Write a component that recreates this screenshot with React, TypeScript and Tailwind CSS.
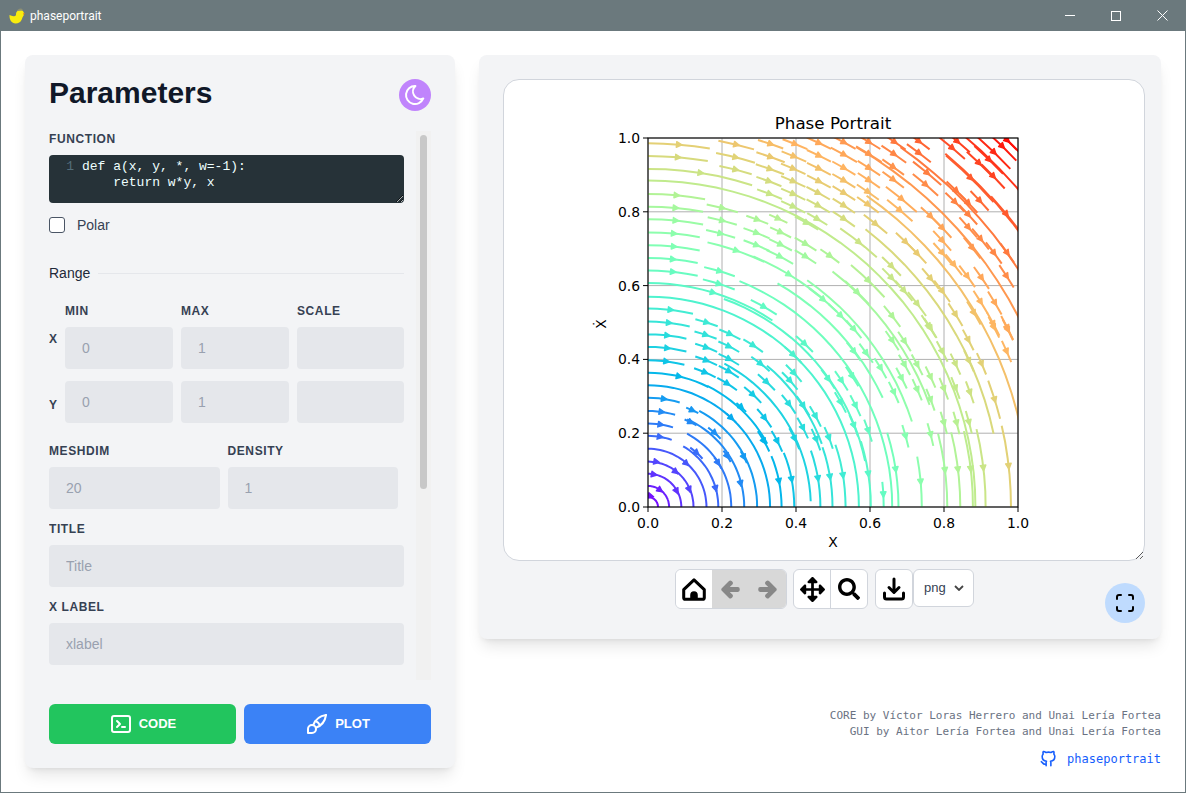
import { TbBrandGithub, TbBrush, TbMaximize, TbMoon, TbTerminal2 } from "react-icons/tb";
import { FaArrowLeft, FaArrowRight, FaArrowsAlt, FaSearch } from "react-icons/fa";

const rainbow = (t: number) => {
  const r = Math.min(1, Math.abs(2 * t - 0.5));
  const g = Math.sin(Math.PI * t);
  const b = Math.cos((Math.PI * t) / 2);
  return `rgb(${Math.round(r * 255)},${Math.round(g * 255)},${Math.round(b * 255)})`;
};

// plot frame inside the 640x480 figure
const PX = 144;
const PY = 58;
const PW = 370;
const PH = 369;
const sx = (v: number) => PX + v * PW;
const sy = (v: number) => PY + PH - v * PH;
const TICKS = [0, 0.2, 0.4, 0.6, 0.8, 1];
const colorOf = (r: number) => rainbow(Math.min(1, r / Math.SQRT2));
const DEG = Math.PI / 180;

// streamlines read off the figure: [radius, from, to], degrees clockwise from the y axis
const LONG_ARCS: number[][] = [
  [0.027, 0, 90], [0.057, 0, 90], [0.09, 0, 90], [0.123, 0, 90], [0.158, 0, 90],
  [0.19, 30, 90], [0.225, 28, 90], [0.26, 24, 90], [0.295, 28, 90], [0.33, 0, 90], [0.365, 26, 62],
  [0.44, 28, 88], [0.5, 40, 70], [0.57, 0, 90], [0.6, 20, 78], [0.66, 22, 90], [0.7, 30, 65],
  [0.75, 35, 72], [0.81, 38, 70], [0.885, 0, 90], [0.955, 38, 78], [1.03, 35, 90], [1.126, 30, 66],
  [1.19, 35, 60], [1.25, 40, 55], [1.32, 40, 55], [1.39, 42, 49],
];

// arrows on dashes that start at the y axis
const LEFT_ANCHORED: number[][] = [
  [235, 105], [232, 143], [300, 190], [228, 257], [225, 295], [225, 333], [220, 372], [220, 411],
  [217, 449], [217, 487], [337, 549], [210, 601], [205, 640],
].map(([a, b]) => [(a - 142) / 1110, 1 - (b - 85) / 1108]).concat(
  [[200, 47], [200, 85], [197, 125], [235, 170], [190, 238], [183, 277], [180, 315], [178, 352]].map(([a, b]) => [
    (a - 142) / 1110,
    (563 - b) / 1110,
  ]),
);

// arrows on dashes that run down to the x axis
const BOTTOM_ANCHORED: number[][] = [
  [535, 485], [573, 480], [652, 477], [688, 472], [727, 468], [803, 463], [848, 525], [885, 450],
  [960, 487], [1033, 452], [1072, 450], [1110, 448], [1148, 445], [1224, 440],
].map(([a, b]) => [(a - 142) / 1110, (563 - b) / 1110]);

// free dashes in the upper half: [x, y, half length], 3x pixels of the figure
const UPPER: number[][] = [
  [407, 105, 55], [510, 103, 40], [583, 103, 40], [655, 100, 40], [730, 98, 40], [805, 97, 40], [882, 97, 40], [955, 95, 40], [1070, 95, 50], [1220, 92, 40],
  [405, 143, 60], [510, 142, 45], [580, 140, 40], [655, 138, 40], [730, 135, 45], [805, 133, 45], [880, 133, 45], [955, 130, 45], [1055, 115, 50], [1205, 110, 60], [1180, 128, 70], [1165, 150, 60], [1135, 160, 50],
  [405, 180, 50], [508, 178, 45], [578, 177, 40], [655, 177, 40], [730, 175, 40], [805, 175, 40], [878, 172, 40], [980, 190, 55], [1110, 205, 100], [1178, 200, 50],
  [505, 215, 40], [578, 215, 40], [655, 215, 40], [730, 213, 40], [805, 212, 40], [878, 210, 40], [975, 225, 50], [1067, 243, 40],
  [507, 253, 40], [578, 253, 40], [653, 250, 40], [730, 250, 40], [802, 247, 40], [903, 268, 60], [1063, 277, 40], [1103, 280, 40], [1137, 273, 40],
  [365, 295, 48], [578, 291, 40], [653, 288, 40], [730, 288, 40], [802, 285, 40], [898, 302, 50], [1103, 315, 40], [1217, 313, 70], [990, 320, 40],
  [365, 333, 45], [470, 330, 35], [533, 327, 30], [618, 340, 40], [650, 328, 35], [730, 328, 40], [825, 343, 45], [1025, 355, 40], [1103, 353, 40],
  [360, 372, 45], [468, 370, 42], [540, 368, 35], [775, 398, 70], [915, 397, 40], [950, 432, 40], [1025, 393, 40], [1140, 388, 40],
  [407, 423, 90], [468, 407, 42], [540, 405, 38], [615, 403, 38], [1025, 430, 40], [1115, 415, 40], [1180, 430, 40], [1220, 430, 35],
  [538, 441, 45], [615, 441, 38], [688, 439, 35], [873, 470, 40], [1060, 465, 40],
  [357, 485, 48], [565, 495, 120], [873, 505, 40], [990, 507, 40], [1100, 500, 40], [1143, 505, 40], [1218, 500, 40],
  [355, 523, 50], [803, 513, 70], [910, 543, 40], [1025, 545, 40], [1140, 577, 40], [1183, 580, 40],
  [490, 592, 45], [668, 570, 55], [770, 548, 50], [950, 583, 45], [1065, 615, 40], [1120, 610, 40], [1178, 643, 40], [1220, 655, 40],
  [720, 618, 50], [875, 620, 40], [985, 650, 40],
];

// free dashes in the lower half
const LOWER: number[][] = [
  [318, 8, 35], [315, 45, 35], [317, 83, 35], [317, 122, 35], [313, 158, 35], [388, 43, 35], [385, 80, 35], [385, 118, 35], [385, 155, 35], [380, 192, 35],
  [458, 77, 35], [480, 132, 35], [498, 187, 35], [457, 225, 35], [612, 72, 35], [578, 105, 35], [580, 160, 35], [568, 183, 35], [565, 253, 35], [608, 258, 35],
  [645, 290, 35], [607, 325, 35], [582, 357, 35], [683, 178, 35], [723, 183, 35], [720, 248, 35], [765, 258, 35], [760, 318, 35], [803, 333, 35], [647, 360, 35],
  [685, 355, 35], [760, 28, 35], [760, 95, 35], [797, 100, 35], [840, 145, 35], [755, 170, 35], [903, 175, 35], [880, 218, 35], [950, 210, 35], [990, 240, 35],
  [915, 350, 35], [875, 62, 35], [912, 65, 35], [990, 25, 35], [1025, 95, 35], [1065, 133, 35], [1105, 123, 35], [1143, 132, 35], [1030, 207, 35], [1065, 205, 35],
  [1108, 218, 35], [990, 172, 35], [950, 135, 35], [912, 135, 35], [1030, 310, 35], [1068, 310, 35], [1105, 308, 35], [990, 345, 35], [1182, 240, 60], [1103, 60, 35],
  [1180, 22, 35], [1222, 30, 35], [1218, 95, 35], [490, 365, 35], [530, 365, 35], [492, 295, 35], [422, 263, 20], [392, 295, 20], [275, 272, 20], [270, 308, 20],
  [342, 340, 25], [288, 400, 25], [352, 430, 20], [380, 410, 20], [430, 413, 20], [257, 432, 10], [225, 457, 10], [228, 515, 10], [266, 510, 10], [345, 507, 10],
  [420, 492, 10], [167, 427, 5], [160, 465, 5], [178, 512, 5], [150, 530, 3],
];

const arcPath = (r: number, a: number, b: number) => {
  const steps = Math.max(2, Math.ceil(Math.abs(b - a) / 3));
  let d = "";
  for (let i = 0; i <= steps; i++) {
    const t = (a + ((b - a) * i) / steps) * DEG;
    d += `${i ? "L" : "M"}${sx(r * Math.sin(t)).toFixed(1)} ${sy(r * Math.cos(t)).toFixed(1)}`;
  }
  return d;
};

const arrowPath = (x: number, y: number) => {
  const len = Math.hypot(x, y) || 1;
  const ux = y / len;
  const uy = x / len;
  const hx = sx(x) + ux * 3;
  const hy = sy(y) + uy * 3;
  const bx = hx - ux * 5.5;
  const by = hy - uy * 5.5;
  const nx = -uy * 2.8;
  const ny = ux * 2.8;
  return `M${hx} ${hy}L${bx + nx} ${by + ny}L${bx - nx} ${by - ny}Z`;
};

type Dash = { r: number; a: number; b: number; arrow?: [number, number] };

const buildDashes = (): Dash[] => {
  const out: Dash[] = [];
  LONG_ARCS.forEach(([r, a, b]) => out.push({ r, a, b }));
  LEFT_ANCHORED.forEach(([x, y]) => {
    const t = Math.atan2(x, y) / DEG;
    out.push({ r: Math.hypot(x, y), a: 0, b: 2 * t, arrow: [x, y] });
  });
  BOTTOM_ANCHORED.forEach(([x, y]) => {
    const t = Math.atan2(x, y) / DEG;
    out.push({ r: Math.hypot(x, y), a: 2 * t - 90, b: 90, arrow: [x, y] });
  });
  const free = (x: number, y: number, h: number) => {
    const r = Math.hypot(x, y);
    const t = Math.atan2(x, y) / DEG;
    const dt = h / 1110 / r / DEG;
    out.push({ r, a: t - dt, b: t + dt, arrow: [x, y] });
  };
  UPPER.forEach(([a, b, h]) => free((a - 142) / 1110, 1 - (b - 85) / 1108, h));
  LOWER.forEach(([a, b, h]) => free((a - 142) / 1110, (563 - b) / 1110, h));
  return out;
};

const dashes = buildDashes();

const PhasePlot = () => (
  <svg width="640" height="480" viewBox="0 0 640 480" className="font-['DejaVu_Sans',sans-serif]">
    <clipPath id="plot-frame">
      <rect x={PX} y={PY} width={PW} height={PH} />
    </clipPath>
    {TICKS.map((t) => (
      <g key={t} stroke="#b0b0b0" strokeWidth="1">
        <line x1={sx(t)} x2={sx(t)} y1={PY} y2={PY + PH} />
        <line x1={PX} x2={PX + PW} y1={sy(t)} y2={sy(t)} />
      </g>
    ))}
    <g clipPath="url(#plot-frame)">
      {dashes.map((s, i) => (
        <path key={i} d={arcPath(s.r, s.a, s.b)} fill="none" stroke={colorOf(s.r)} strokeWidth="2" />
      ))}
      {dashes.map((s, i) =>
        s.arrow ? (
          <path
            key={i}
            d={arrowPath(s.arrow[0], s.arrow[1])}
            fill={colorOf(s.r)}
            stroke={colorOf(s.r)}
            strokeWidth="1.4"
            strokeLinejoin="round"
          />
        ) : null,
      )}
    </g>
    <rect x={PX} y={PY} width={PW} height={PH} fill="none" stroke="#000" strokeWidth="1.1" />
    {TICKS.map((t) => (
      <g key={t} fontSize="13.9" fill="#000">
        <line x1={sx(t)} x2={sx(t)} y1={PY + PH} y2={PY + PH + 5} stroke="#000" />
        <line x1={PX} x2={PX - 5} y1={sy(t)} y2={sy(t)} stroke="#000" />
        <text x={sx(t)} y={PY + PH + 21} textAnchor="middle">
          {t.toFixed(1)}
        </text>
        <text x={PX - 8} y={sy(t) + 5} textAnchor="end">
          {t.toFixed(1)}
        </text>
      </g>
    ))}
    <text x={PX + PW / 2} y={PY - 9} textAnchor="middle" fontSize="16.7">
      Phase Portrait
    </text>
    <text x={PX + PW / 2} y={PY + PH + 40} textAnchor="middle" fontSize="13.9">
      X
    </text>
    <text x={102} y={244} textAnchor="middle" fontSize="13.9" transform="rotate(-90 102 244)">
      Ẋ
    </text>
  </svg>
);

const Duck = () => (
  <svg width="16" height="16" viewBox="0 0 16 16">
    <path d="M0.500 7c2 1 3.500 1.500 5.500 1 .6-.2 1-.6 1-1.500V6a4 4 0 1 1 7 2.500c-.6 1-.8 2-1.500 3.500-1 2-3 3.500-6 3.500C2.500 15.500.300 12 0.500 7z" fill="#f9ec0e" />
    <path d="M8 3c.6-1.500 2-2.400 3.500-2.400 1 0 2 .5 2.500 2z" fill="#8f9072" />
    <path d="M14 5l2 .5-2 1.500z" fill="#ef8a1c" />
  </svg>
);

const Label = ({ children }: { children: string }) => (
  <label className="block text-xs font-bold uppercase tracking-[0.05em] leading-4 text-gray-700">{children}</label>
);

const Input = ({ placeholder, className }: { placeholder?: string; className: string }) => (
  <input
    placeholder={placeholder}
    className={`h-[42px] rounded bg-gray-200 px-[17px] text-sm text-gray-700 outline-none placeholder:text-gray-400 ${className}`}
  />
);

const ToolBtn = ({ children, className }: { children: React.ReactNode; className: string }) => (
  <div className={`flex h-[38px] items-center justify-center ${className}`}>{children}</div>
);

export default function App() {
  return (
    <div className="flex h-[793px] w-[1186px] flex-col overflow-hidden border border-t-0 border-[#6b797d] bg-white font-['Liberation_Sans',Arial,sans-serif]">
      {/* title bar */}
      <div className="-mx-px flex h-[31px] shrink-0 items-center bg-[#6b797d] pl-[9px] text-white">
        <Duck />
        <span className="ml-[5px] font-['Roboto',sans-serif] text-xs">phaseportrait</span>
        <div className="ml-auto mr-px flex items-center">
          <div className="flex w-[46px] justify-center">
            <div className="h-px w-2.5 bg-white" />
          </div>
          <div className="flex w-[46px] justify-center">
            <div className="h-2.5 w-2.5 border border-white" />
          </div>
          <div className="flex w-[46px] justify-center">
            <svg width="11" height="11" viewBox="0 0 11 11" stroke="#fff" strokeWidth="1">
              <path d="M.5.5l10 10M10.500.5l-10 10" />
            </svg>
          </div>
        </div>
      </div>

      <div className="flex flex-1 items-start pl-6 pr-6 pt-6">
        {/* left panel */}
        <div className="flex h-[713px] w-[430px] shrink-0 flex-col rounded-lg bg-gray-100 pl-6 pr-6 shadow-lg">
          <div className="flex h-[76px] shrink-0 items-start justify-between pt-6">
            <h1 className="text-3xl font-bold leading-[27px] text-gray-900">Parameters</h1>
            <div className="flex h-8 w-8 items-center justify-center rounded-full bg-[#c084fc] text-white">
              <TbMoon size={24} />
            </div>
          </div>

          <div className="flex h-[549px] w-[382px] shrink-0">
            <div className="w-[367px] overflow-hidden pr-3">
              <Label>Function</Label>
              <div className="mt-2 h-12 w-[355px] resize-y overflow-auto rounded bg-[#263238] pt-1 font-['Liberation_Mono',monospace] text-[13px] leading-4 text-[#eeffff]">
                <div className="flex">
                  <span className="w-[25px] text-right text-[#546e7a]">1</span>
                  <span className="ml-2 whitespace-pre">def a(x, y, *, w=-1):</span>
                </div>
                <div className="ml-[33px] whitespace-pre">{"    return w*y, x"}</div>
              </div>

              <label className="mt-3 flex items-center text-sm text-gray-700">
                <span className="h-4 w-4 rounded-[3px] border border-gray-600 bg-white" />
                <span className="ml-3">Polar</span>
              </label>

              <div className="mt-[30px] flex items-center text-sm text-gray-800">
                <span className="leading-4">Range</span>
                <div className="ml-2 h-px w-[306px] bg-gray-200" />
              </div>

              <div className="mt-[22px] w-[355px]">
                <div className="ml-4 grid grid-cols-[108px_108px_107px] gap-2">
                  <Label>Min</Label>
                  <Label>Max</Label>
                  <Label>Scale</Label>
                </div>
                <div className="mt-2 flex">
                  <div className="w-4 pt-1 text-xs font-bold leading-4 text-gray-700">X</div>
                  <div className="grid flex-1 grid-cols-[108px_108px_107px] gap-2">
                    <Input placeholder="0" className="w-full" />
                    <Input placeholder="1" className="w-full" />
                    <Input className="w-full" />
                  </div>
                </div>
                <div className="mt-3 flex">
                  <div className="w-4 pt-4 text-xs font-bold leading-4 text-gray-700">Y</div>
                  <div className="grid flex-1 grid-cols-[108px_108px_107px] gap-2">
                    <Input placeholder="0" className="w-full" />
                    <Input placeholder="1" className="w-full" />
                    <Input className="w-full" />
                  </div>
                </div>
              </div>

              <div className="mt-5 grid w-[349px] grid-cols-2 gap-2">
                <Label>Meshdim</Label>
                <Label>Density</Label>
                <Input placeholder="20" className="w-full" />
                <Input placeholder="1" className="w-full" />
              </div>

              <div className="mt-3">
                <Label>Title</Label>
              </div>
              <Input placeholder="Title" className="mt-2 w-[355px]" />
              <div className="mt-3">
                <Label>X Label</Label>
              </div>
              <Input placeholder="xlabel" className="mt-2 w-[355px]" />
            </div>

            {/* scrollbar, drawn since the page's own doesn't show in the shot */}
            <div className="h-full w-[15px] shrink-0 bg-[#f1f1f1] pl-1 pt-1">
              <div className="h-[354px] w-[7px] rounded-full bg-[#c8c8c8]" />
            </div>
          </div>

          <div className="mt-6 grid w-[382px] grid-cols-2 gap-2">
            <button className="flex h-10 items-center justify-center gap-1.5 rounded-md bg-[#22c55e] text-[13px] font-bold text-white">
              <TbTerminal2 size={24} />
              CODE
            </button>
            <button className="flex h-10 items-center justify-center gap-1.5 rounded-md bg-[#3b82f6] text-[13px] font-bold text-white">
              <TbBrush size={24} />
              PLOT
            </button>
          </div>
        </div>

        {/* right column */}
        <div className="ml-6 flex h-[713px] w-[682px] flex-col">
          <div className="relative h-[584px] rounded-lg bg-gray-100 pl-6 pr-4 pt-6 shadow-lg">
            <div className="flex h-[482px] resize justify-center overflow-auto rounded-2xl border border-gray-300 bg-white">
              <PhasePlot />
            </div>
            <div className="ml-[172px] mt-2 flex">
              <div className="flex overflow-hidden rounded-md border border-gray-300">
                <ToolBtn className="w-[36px] bg-white">
                  <svg width="26" height="26" viewBox="0 0 24 24">
                    <path d="M12 3.500 2.500 12.500V20a1.500 1.500 0 0 0 1.500 1.500h16a1.500 1.500 0 0 0 1.500-1.500v-7.500z" fill="none" stroke="#000" strokeWidth="2.800" strokeLinejoin="round" />
                    <path d="M8.500 21v-3.500a3.500 3.500 0 0 1 7 0V21z" fill="#000" />
                  </svg>
                </ToolBtn>
                <ToolBtn className="w-[37px] bg-[#d8d8d8] text-[#888]">
                  <FaArrowLeft size={19} stroke="currentColor" strokeWidth={50} />
                </ToolBtn>
                <ToolBtn className="w-[37px] bg-[#d8d8d8] text-[#888]">
                  <FaArrowRight size={19} stroke="currentColor" strokeWidth={50} />
                </ToolBtn>
              </div>
              <div className="ml-[6px] flex overflow-hidden rounded-md border border-gray-300 bg-white text-black">
                <ToolBtn className="w-[37px] border-r border-gray-300">
                  <FaArrowsAlt size={25} />
                </ToolBtn>
                <ToolBtn className="w-[36px]">
                  <FaSearch size={22} />
                </ToolBtn>
              </div>
              <div className="ml-[7px] flex overflow-hidden rounded-md border border-gray-300 bg-white">
                <ToolBtn className="w-[36px]">
                  <svg width="26" height="26" viewBox="0 0 26 26">
                    <path d="M13 3v13M8 11.500l5 5 5-5" fill="none" stroke="#000" strokeWidth="3" strokeLinecap="round" strokeLinejoin="round" />
                    <path d="M3.500 17v4a2 2 0 0 0 2 2h15a2 2 0 0 0 2-2v-4" fill="none" stroke="#000" strokeWidth="3" strokeLinecap="round" />
                  </svg>
                </ToolBtn>
              </div>
              <div className="flex h-[38px] w-[61px] items-center justify-between rounded-md border border-gray-300 bg-white pl-2.5 pr-[9px] text-[13px] text-gray-700">
                png
                <svg width="10" height="6" viewBox="0 0 10 6" fill="none" stroke="#444" strokeWidth="1.800">
                  <path d="M1 1l4 4 4-4" />
                </svg>
              </div>
            </div>
            <div className="absolute bottom-4 right-4 flex h-10 w-10 items-center justify-center rounded-full bg-[#bfdbfe] text-black">
              <TbMaximize size={24} />
            </div>
          </div>

          <div className="mt-[69px] text-right font-['DejaVu_Sans_Mono',monospace] text-[11px] leading-4 text-gray-500">
            <p>CORE by Víctor Loras Herrero and Unai Lería Fortea</p>
            <p>GUI by Aitor Lería Fortea and Unai Lería Fortea</p>
            <div className="mt-[9px] flex items-center justify-end gap-[9px] text-xs text-blue-600">
              <TbBrandGithub size={19} />
              <span>phaseportrait</span>
            </div>
          </div>
        </div>
      </div>
    </div>
  );
}
